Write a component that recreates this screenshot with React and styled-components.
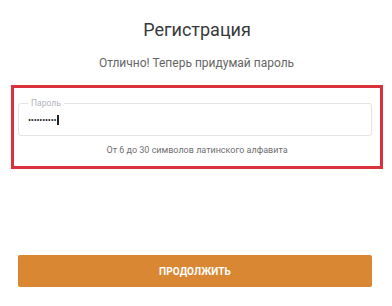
import styled, { createGlobalStyle } from 'styled-components';

const GlobalStyle = createGlobalStyle`
  body {
    margin: 0;
    background: #fff;
    font-family: Roboto, "Noto Sans", Arial, sans-serif;
  }
`;

const Page = styled.div`
  width: 392px;
  height: 306px;
  box-sizing: border-box;
  padding: 19px 9px 0 11px;
  display: flex;
  flex-direction: column;
`;

const Title = styled.h1`
  margin: 0;
  font-size: 18px;
  line-height: 22px;
  font-weight: 400;
  color: #38393c;
  text-align: center;
`;

const Subtitle = styled.p`
  margin: 14px 0 0;
  font-size: 12px;
  line-height: 16px;
  color: #666;
  text-align: center;
  padding-right: 1px;
`;

const Highlight = styled.div`
  margin-top: 14px;
  border: 3px solid #d9323c;
  padding: 10px 8px 0 4px;
  box-sizing: content-box;
  height: 68px;
`;

const Field = styled.fieldset`
  margin: 0;
  padding: 0 10px 4px 9px;
  border: 1px solid #e3e3e3;
  border-radius: 3px;
  min-width: 0;
`;

const Legend = styled.legend`
  padding: 0 3px;
  margin-left: 0;
  font-size: 8.5px;
  line-height: 11px;
  color: #b3b6bb;
`;

const Value = styled.div`
  height: 22px;
  display: flex;
  align-items: center;
`;

const Dots = styled.span`
  font-size: 9px;
  letter-spacing: -0.2px;
  color: #222;
  line-height: 1;
`;

const Caret = styled.span`
  display: inline-block;
  width: 1.5px;
  height: 10px;
  margin-left: 1px;
  background: #222;
`;

const Hint = styled.div`
  margin-top: 8px;
  font-size: 9px;
  line-height: 12px;
  color: #6f6f6f;
  text-align: center;
  padding-left: 4px;
`;

const Button = styled.button`
  margin: 86px 11px 0 7px;
  height: 32px;
  border: none;
  border-radius: 2px;
  background: #da8734;
  color: #fff;
  font-family: Roboto, Arial, sans-serif;
  font-weight: 700;
  font-size: 10px;
  letter-spacing: 0.1px;
  cursor: pointer;
`;

export default function App() {
  return (
    <>
      <GlobalStyle />
      <Page>
        <Title>Регистрация</Title>
        <Subtitle>Отлично! Теперь придумай пароль</Subtitle>
        <Highlight>
          <Field>
            <Legend>Пароль</Legend>
            <Value>
              <Dots>••••••••••</Dots>
              <Caret />
            </Value>
          </Field>
          <Hint>От 6 до 30 символов латинского алфавита</Hint>
        </Highlight>
        <Button>ПРОДОЛЖИТЬ</Button>
      </Page>
    </>
  );
}
